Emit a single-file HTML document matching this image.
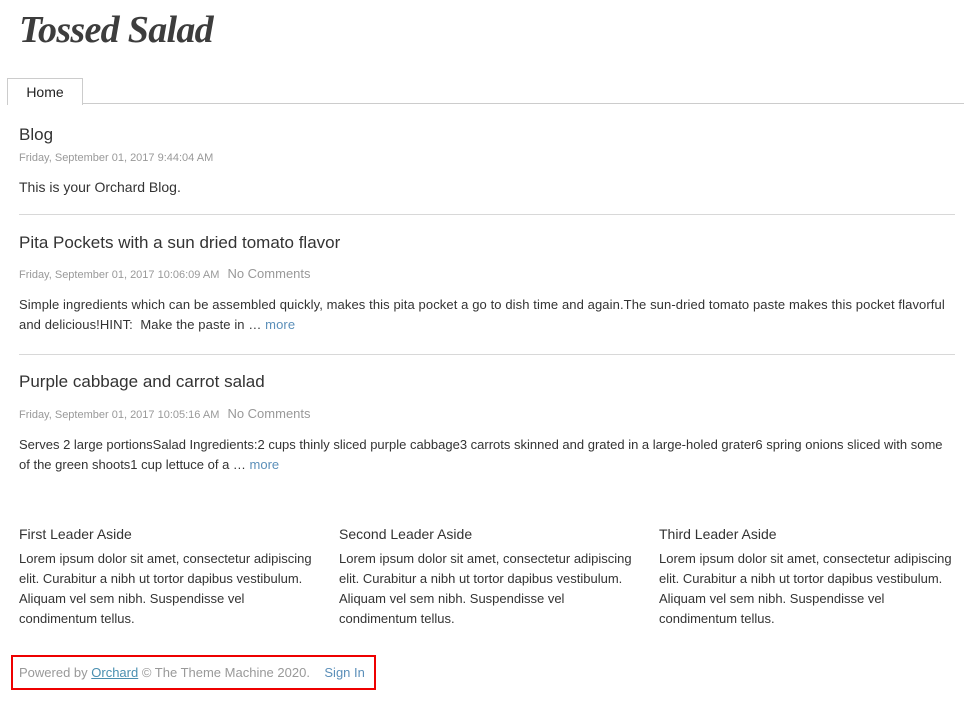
<!DOCTYPE html>
<html><head><meta charset="utf-8"><style>
body{margin:0;background:#fff;font-family:"Liberation Sans",sans-serif;color:#333;width:964px;height:703px;position:relative;overflow:hidden}
.a{position:absolute;white-space:nowrap}
h1{position:absolute;left:19px;top:8px;margin:0;font:italic bold 38px "Liberation Serif",serif;color:#3d3d3d;letter-spacing:-0.7px}
.tab{position:absolute;left:7px;top:78px;width:74px;height:26px;border:1px solid #ccc;border-bottom:none;background:#fff;font-size:14px;text-align:center;line-height:26px;color:#222}
.line{position:absolute;height:1px;background:#d8d8d8}
.meta{font-size:11px;color:#999}
.nc{font-size:13px;color:#999}
.p{font-size:13px;color:#333;line-height:20px}
.more{color:#5b8fb9}
.t{font-size:17px;color:#333}
.ah{font-size:14px;color:#333}
.box{position:absolute;left:11px;top:655px;width:361px;height:31px;border:2px solid #e00}
</style></head><body>
<h1>Tossed Salad</h1>
<div class="line" style="left:7px;top:103px;width:957px;background:#ccc"></div>
<div class="tab">Home</div>
<div class="a t" style="left:19px;top:125px">Blog</div>
<div class="a meta" style="left:19px;top:152px">Friday, September 01, 2017 9:44:04 AM</div>
<div class="a" style="left:19px;top:179px;font-size:14px">This is your Orchard Blog.</div>
<div class="line" style="left:19px;top:214px;width:936px"></div>
<div class="a t" style="left:19px;top:233px">Pita Pockets with a sun dried tomato flavor</div>
<div class="a" style="left:19px;top:265px"><span class="meta">Friday, September 01, 2017 10:06:09 AM</span> <span class="nc">&nbsp;No Comments</span></div>
<div class="a p" style="left:19px;top:295px;letter-spacing:0.1px">Simple ingredients which can be assembled quickly, makes this pita pocket a go to dish time and again.The sun-dried tomato paste makes this pocket flavorful<br>and delicious!HINT:&nbsp; Make the paste in … <span class="more">more</span></div>
<div class="line" style="left:19px;top:354px;width:936px"></div>
<div class="a t" style="left:19px;top:372px">Purple cabbage and carrot salad</div>
<div class="a" style="left:19px;top:405px"><span class="meta">Friday, September 01, 2017 10:05:16 AM</span> <span class="nc">&nbsp;No Comments</span></div>
<div class="a p" style="left:19px;top:435px">Serves 2 large portionsSalad Ingredients:2 cups thinly sliced purple cabbage3 carrots skinned and grated in a large-holed grater6 spring onions sliced with some<br>of the green shoots1 cup lettuce of a … <span class="more">more</span></div>
<div class="a ah" style="left:19px;top:526px">First Leader Aside</div>
<div class="a p" style="left:19px;top:549px">Lorem ipsum dolor sit amet, consectetur adipiscing<br>elit. Curabitur a nibh ut tortor dapibus vestibulum.<br>Aliquam vel sem nibh. Suspendisse vel<br>condimentum tellus.</div>
<div class="a ah" style="left:339px;top:526px">Second Leader Aside</div>
<div class="a p" style="left:339px;top:549px">Lorem ipsum dolor sit amet, consectetur adipiscing<br>elit. Curabitur a nibh ut tortor dapibus vestibulum.<br>Aliquam vel sem nibh. Suspendisse vel<br>condimentum tellus.</div>
<div class="a ah" style="left:659px;top:526px">Third Leader Aside</div>
<div class="a p" style="left:659px;top:549px">Lorem ipsum dolor sit amet, consectetur adipiscing<br>elit. Curabitur a nibh ut tortor dapibus vestibulum.<br>Aliquam vel sem nibh. Suspendisse vel<br>condimentum tellus.</div>
<div class="box"></div>
<div class="a" style="left:19px;top:665px;font-size:13px;color:#999">Powered by <span style="color:#4a8fb0;text-decoration:underline">Orchard</span> © The Theme Machine 2020. &nbsp;&nbsp; <span class="more">Sign In</span></div>
</body></html>
